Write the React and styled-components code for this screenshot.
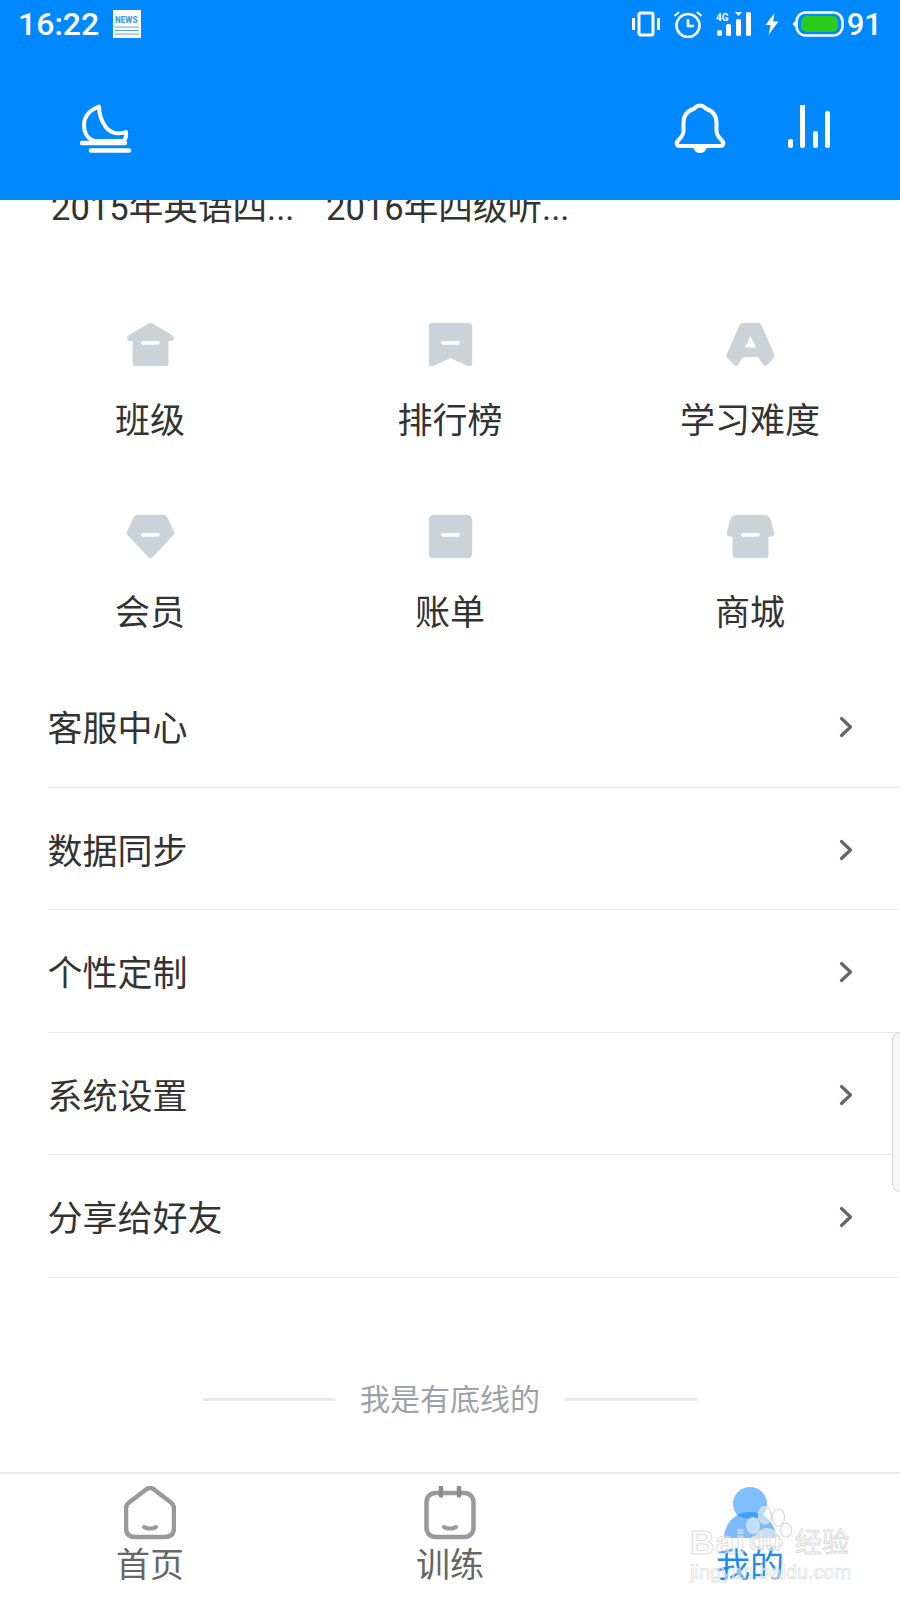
import React from 'react'
import styled, { createGlobalStyle } from 'styled-components'

const GlobalStyle = createGlobalStyle`
  html, body {
    margin: 0;
    padding: 0;
    background: #fff;
  }
  * {
    box-sizing: border-box;
  }
`

const cjk = `Roboto, "Noto Sans CJK SC", sans-serif`

const Page = styled.div`
  position: relative;
  display: flex;
  flex-direction: column;
  width: 900px;
  height: 1600px;
  overflow: hidden;
  background: #fff;
  font-family: ${cjk};
`

const Header = styled.header`
  flex: none;
  position: relative;
  z-index: 1;
  height: 200px;
  background: #0088ff;
  color: #fff;
`

const StatusBar = styled.div`
  display: flex;
  align-items: center;
  height: 50px;
  padding: 0 18px 2px 18px;
`

const Time = styled.span`
  font-size: 32px;
  font-weight: 500;
  line-height: 1;
`

const StatusLeft = styled.div`
  display: flex;
  align-items: center;
  gap: 14px;
`

const StatusRight = styled.div`
  display: flex;
  align-items: center;
  gap: 13px;
  margin-left: auto;
`

const Level = styled.span`
  font-size: 31px;
  font-weight: 500;
  line-height: 1;
  margin-left: -10px;
`

const ActionBar = styled.div`
  display: flex;
  align-items: center;
  height: 150px;
  padding: 8px 69px 0 80px;
`

const ActionRight = styled.div`
  display: flex;
  align-items: center;
  gap: 61px;
  margin-left: auto;
`

const Content = styled.main`
  flex: 1;
  min-height: 0;
  overflow: hidden;
`

const Recent = styled.div`
  display: flex;
  height: 93px;
  margin-top: -12px;
  padding-left: 51px;
`

const RecentTitle = styled.span`
  width: 275px;
  font-size: 34.6px;
  line-height: 40px;
  color: #333;
  white-space: nowrap;
`

const Shortcuts = styled.section`
  display: grid;
  grid-template-columns: repeat(3, 300px);
  grid-auto-rows: 192px;
`

const Shortcut = styled.div`
  display: flex;
  flex-direction: column;
  align-items: center;
  padding-top: 42px;
`

const ShortcutIcon = styled.svg`
  width: 49px;
  height: 43.4px;
  fill: #cbd3d8;
`

const ShortcutLabel = styled.span`
  margin-top: 31px;
  font-size: 35px;
  line-height: 50px;
  color: #333;
`

const Menu = styled.ul`
  list-style: none;
  margin: 0 0 0 47.5px;
  padding: 0;
`

const MenuRow = styled.li`
  display: flex;
  align-items: center;
  justify-content: space-between;
  height: 122.5px;
  padding: 0 47px 0 0;
  border-bottom: 1.5px solid #e6e6e6;
  font-size: 35px;
  color: #333;
`

const Chevron = styled.svg`
  width: 14px;
  height: 24px;
  margin-top: 3px;
  fill: none;
  stroke: #666;
  stroke-width: 3.2;
  stroke-linecap: round;
  stroke-linejoin: round;
`

const EndNote = styled.div`
  display: flex;
  align-items: center;
  justify-content: center;
  gap: 25px;
  margin-top: 100px;
  font-size: 30px;
  line-height: 44px;
  color: #9ca2a7;
`

const EndRule = styled.span`
  width: 132px;
  height: 3px;
  background: #e9e9e9;
`

const TabBar = styled.nav`
  flex: none;
  display: grid;
  grid-template-columns: repeat(3, 300px);
  height: 128px;
  border-top: 2px solid #ececec;
  background: #fff;
`

const Tab = styled.div`
  display: flex;
  flex-direction: column;
  align-items: center;
  padding-top: 12px;
  font-size: 34px;
  line-height: 44px;
  color: ${(props) => (props.$active ? '#1a8cf0' : '#666')};
`

const TabIcon = styled.svg`
  width: 52px;
  height: 54px;
  margin-bottom: 3px;
`

const EdgeHandle = styled.div`
  position: absolute;
  top: 1032px;
  right: 0;
  width: 8px;
  height: 160px;
  background: #f6f6f6;
  border: 1.5px solid #d8d8d8;
  border-right: 0;
  border-radius: 8px 0 0 8px;
`

const Watermark = styled.div`
  position: absolute;
  left: 688px;
  top: 1500px;
  width: 175px;
  height: 84px;
  font-family: "Liberation Sans", "Noto Sans CJK SC", sans-serif;
  color: rgba(255, 255, 255, 0.3);
  -webkit-text-stroke: 1px #dcdcdc;
  pointer-events: none;
`

const MarkBai = styled.span`
  position: absolute;
  left: 2px;
  top: 25px;
  font-size: 34px;
  line-height: 34px;
  font-weight: 700;
  letter-spacing: 1px;
`

const MarkDu = styled.span`
  position: absolute;
  left: 61px;
  top: 26px;
  font-size: 26px;
  line-height: 30px;
  font-weight: 700;
`

const MarkJing = styled.span`
  position: absolute;
  left: 107px;
  top: 28px;
  font-size: 27px;
  line-height: 30px;
  white-space: nowrap;
`

const MarkUrl = styled.span`
  position: absolute;
  left: 2px;
  top: 60px;
  font-size: 20px;
  line-height: 24px;
  white-space: nowrap;
  -webkit-text-stroke-width: 0.7px;
`

const MarkPaw = styled.svg`
  position: absolute;
  left: 54px;
  top: 4px;
  width: 52px;
  height: 46px;
  fill: rgba(255, 255, 255, 0.5);
  stroke: #dcdcdc;
  stroke-width: 1.6;
`

const VibrateIcon = () => (
  <svg width="28" height="26" viewBox="0 0 28 26" fill="none" stroke="#fff">
    <rect x="7" y="2" width="14" height="22" rx="1.5" strokeWidth="3" />
    <path d="M1.5 7v12M26.5 7v12" strokeWidth="3" />
  </svg>
)

const AlarmIcon = () => (
  <svg width="30" height="28" viewBox="0 0 30 28" fill="none" stroke="#fff" strokeWidth="2.6">
    <circle cx="15" cy="15.500" r="11.500" />
    <path d="M15 9v7h6" />
    <path d="M1.500 6L6 2M28.500 6L24 2" strokeWidth="2" />
  </svg>
)

const SignalIcon = () => (
  <svg width="36" height="26" viewBox="0 0 36 26" fill="#fff">
    <text x="0" y="9.500" fontSize="10" fontWeight="700" fontFamily="Roboto, sans-serif">4G</text>
    <rect x="1" y="19" width="5" height="6" rx="2" />
    <rect x="10" y="13" width="5" height="12" rx="1.500" />
    <rect x="20" y="8" width="5" height="17" rx="1.500" />
    <rect x="30" y="1" width="5" height="24" rx="1.500" />
    <path d="M19 1h7l-3.500 4z" />
  </svg>
)

const BoltIcon = () => (
  <svg width="14" height="22" viewBox="0 0 14 22" fill="#fff">
    <path d="M9.500 0L0.500 12h5L3.500 22l10-13.500H8.200z" />
  </svg>
)

const BatteryIcon = () => (
  <svg width="52" height="26" viewBox="0 0 52 26">
    <path d="M0.500 13l3-3v6z" fill="#fff" />
    <rect x="4.500" y="1.500" width="46" height="23" rx="9" fill="none" stroke="#fff" strokeWidth="2.600" />
    <rect x="9" y="5" width="37" height="16" rx="6" fill="#2bcb1e" />
  </svg>
)

const NewsIcon = () => (
  <svg width="28" height="28" viewBox="0 0 28 28">
    <rect width="28" height="28" fill="#fff" />
    <text x="2" y="13" fontSize="8.200" fontWeight="900" fill="#4a9ee0" fontFamily="Roboto, sans-serif">NEWS</text>
    <path d="M2 17h24M2 20.500h24M2 24h24" stroke="#5aa5dd" strokeWidth="1.200" />
  </svg>
)

const MoonIcon = () => (
  <svg width="52" height="50" viewBox="0 0 52 50" fill="none" stroke="#fff" strokeLinecap="round" strokeLinejoin="round">
    <path
      d="M19 2.500C9 6.500 4 13 4 21c0 8 4 14 10 16h30c2-3 2.500-6 2-9-8 3-16 1-21-6-4-6-6-13-6-19.500z"
      strokeWidth="4"
    />
    <path d="M2 39h43M11 46.500h38" strokeWidth="4.600" />
  </svg>
)

const BellIcon = () => (
  <svg width="52" height="52" viewBox="0 0 52 52" fill="none" stroke="#fff" strokeWidth="4" strokeLinejoin="round">
    <path d="M26 2.500c-3 0-5 2-6.500 3.500C13 8 9.500 13 9.500 20v8c0 3-2 6-5 9-3 3-2 6 1.500 6h40c3.500 0 4.500-3 1.500-6-3-3-5-6-5-9v-8c0-7-3.500-12-10-14C31 4.500 29 2.500 26 2.500z" />
    <path d="M19 44.500c1 3.500 3.500 5.500 7 5.500s6-2 7-5.500z" fill="#fff" stroke="none" />
  </svg>
)

const ChartIcon = () => (
  <svg width="44" height="48" viewBox="0 4 44 48" fill="#fff">
    <rect x="1" y="38" width="5" height="9" rx="2" />
    <rect x="13" y="1" width="5" height="46" rx="2" />
    <rect x="26" y="30" width="5" height="17" rx="2" />
    <rect x="38" y="10" width="5" height="37" rx="2" />
  </svg>
)

const Dash = () => <rect x="16" y="19" width="20" height="4" rx="2" fill="#fff" />

const shortcuts = [
  {
    label: '班级',
    art: (
      <>
        <path d="M26 0c1 0 2 .4 3 1l20 12c3 2 2 6-1 6h-3v24c0 2-1 3-3 3H10c-2 0-3-1-3-3V19H4c-3 0-4-4-1-6L23 1c1-.6 2-1 3-1z" />
        <Dash />
      </>
    ),
  },
  {
    label: '排行榜',
    art: (
      <>
        <path d="M7 0h38c3 0 4 1.500 4 4v39c0 3-2 4-4 3l-19-9-19 9c-2 1-4 0-4-3V4c0-2.500 1-4 4-4z" />
        <Dash />
      </>
    ),
  },
  {
    label: '学习难度',
    art: (
      <path
        fillRule="evenodd"
        d="M18 0h16c2 0 3 1 4 3l13 30c1 2 1 3-1 5l-6 6c-2 2-4 2-5 0l-5-8H18l-5 8c-1 2-3 2-5 0l-6-6c-2-2-2-3-1-5L14 3c1-2 2-3 4-3zM26 14l-6 12h12z"
      />
    ),
  },
  {
    label: '会员',
    art: (
      <>
        <path d="M12 0h28c2 0 3 1 4 2.500l7 15c.7 1.500.5 2.500-.5 3.500L28.500 44.500c-1.500 1.500-3.500 1.500-5 0L1.500 21C.5 20 .3 19 1 17.500l7-15C9 1 10 0 12 0z" />
        <Dash />
      </>
    ),
  },
  {
    label: '账单',
    art: (
      <>
        <rect x="3" y="0" width="46" height="46" rx="5" />
        <Dash />
      </>
    ),
  },
  {
    label: '商城',
    art: (
      <>
        <path d="M11 0h30c3 0 5 2 6 4l4 14c1 3-1 5-4 5h-2v19c0 3-2 4-4 4H11c-2 0-4-1-4-4V23H5c-3 0-5-2-4-5L5 4c1-2 3-4 6-4z" />
        <Dash />
      </>
    ),
  },
]

const menuItems = ['客服中心', '数据同步', '个性定制', '系统设置', '分享给好友']

const Smile = () => (
  <path d="M20 41c3 2 9 2 12 0" fill="none" stroke="#999" strokeWidth="4" strokeLinecap="round" />
)

const tabs = [
  {
    label: '首页',
    art: (
      <g>
        <path
          d="M22 3.500c2.500-2 5.500-2 8 0l17 13c2 1.500 3 3 3 6V42c0 6-3 9-9 9H11c-6 0-9-3-9-9V22.500c0-3 1-4.500 3-6z"
          fill="none"
          stroke="#999"
          strokeWidth="4.500"
        />
        <Smile />
      </g>
    ),
  },
  {
    label: '训练',
    art: (
      <g>
        <rect x="2.500" y="7" width="47" height="44" rx="9" fill="none" stroke="#999" strokeWidth="4.500" />
        <path d="M17 1.500v8M35 1.500v8" stroke="#8a8a8a" strokeWidth="4.500" strokeLinecap="round" />
        <Smile />
      </g>
    ),
  },
  {
    label: '我的',
    art: (
      <g>
        <path d="M0 52c0-14 11-26 26-26s26 12 26 26z" fill="#7dbcfb" />
        <circle cx="26" cy="18" r="17" fill="#7fbefc" />
        <path d="M13 29c8 5 18 5 26 0-3-2-8-3-13-3s-10 1-13 3z" fill="#3f9ef8" />
      </g>
    ),
    active: true,
  },
]

const App = () => (
  <Page>
    <GlobalStyle />
    <Header>
      <StatusBar>
        <StatusLeft>
          <Time>16:22</Time>
          <NewsIcon />
        </StatusLeft>
        <StatusRight>
          <VibrateIcon />
          <AlarmIcon />
          <SignalIcon />
          <BoltIcon />
          <BatteryIcon />
          <Level>91</Level>
        </StatusRight>
      </StatusBar>
      <ActionBar>
        <MoonIcon />
        <ActionRight>
          <BellIcon />
          <ChartIcon />
        </ActionRight>
      </ActionBar>
    </Header>
    <Content>
      <Recent>
        <RecentTitle>2015年英语四...</RecentTitle>
        <RecentTitle>2016年四级听...</RecentTitle>
      </Recent>
      <Shortcuts>
        {shortcuts.map((item) => (
          <Shortcut key={item.label}>
            <ShortcutIcon viewBox="0 0 52 46">{item.art}</ShortcutIcon>
            <ShortcutLabel>{item.label}</ShortcutLabel>
          </Shortcut>
        ))}
      </Shortcuts>
      <Menu>
        {menuItems.map((item) => (
          <MenuRow key={item}>
            {item}
            <Chevron viewBox="0 0 14 24">
              <path d="M2.500 3.500l9 8.500-9 8.500" />
            </Chevron>
          </MenuRow>
        ))}
      </Menu>
      <EndNote>
        <EndRule />
        我是有底线的
        <EndRule />
      </EndNote>
    </Content>
    <TabBar>
      {tabs.map((tab) => (
        <Tab key={tab.label} $active={tab.active}>
          <TabIcon viewBox="0 0 52 54">{tab.art}</TabIcon>
          {tab.label}
        </Tab>
      ))}
    </TabBar>
    <EdgeHandle />
    <Watermark>
      <MarkPaw viewBox="0 0 66 56">
        <ellipse cx="14" cy="26" rx="8" ry="10" />
        <ellipse cx="29" cy="13" rx="8" ry="11" />
        <ellipse cx="46" cy="16" rx="8" ry="11" />
        <ellipse cx="56" cy="32" rx="7" ry="9" />
        <path d="M32 30c8 0 12 8 18 14 5 7-3 11-9 9-6-2-12-2-18 0-7 2-13-3-9-10 5-5 9-13 18-13z" />
      </MarkPaw>
      <MarkBai>Bai</MarkBai>
      <MarkDu>du</MarkDu>
      <MarkJing>经验</MarkJing>
      <MarkUrl>jingyan.baidu.com</MarkUrl>
    </Watermark>
  </Page>
)

export default App
